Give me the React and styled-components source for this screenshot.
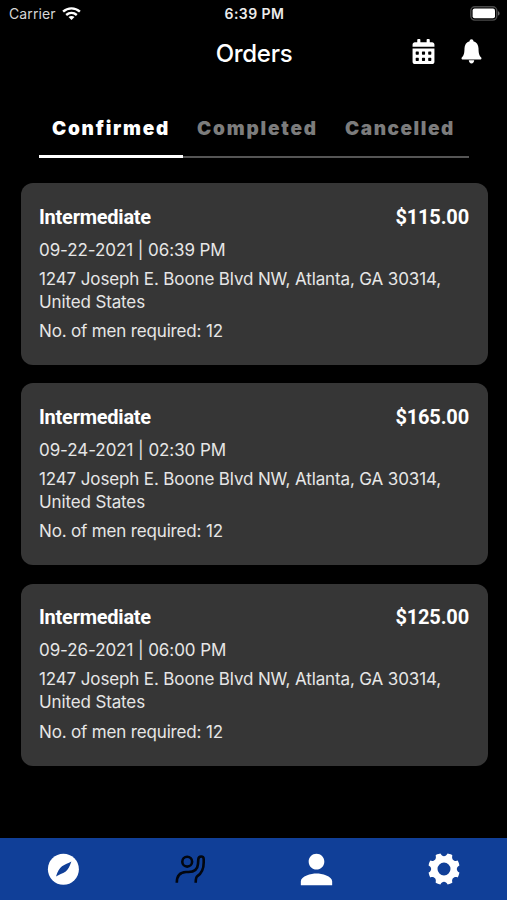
import React from "react";
import styled, { createGlobalStyle } from "styled-components";
import { FaCalendarAlt } from "react-icons/fa";
import { MdPerson } from "react-icons/md";

const GlobalStyle = createGlobalStyle`
  * { box-sizing: border-box; }
  body { margin: 0; background: #000; }
`;

const Screen = styled.main`
  width: 507px;
  height: 900px;
  display: flex;
  flex-direction: column;
  background: #000;
  color: #fff;
  font-family: Inter, "Liberation Sans", sans-serif;
  overflow: hidden;
`;

const StatusBar = styled.div`
  height: 28px;
  flex: none;
  display: grid;
  grid-template-columns: 1fr auto 1fr;
  align-items: center;
  padding: 0 7px 1px 9px;
  font-size: 14px;
  line-height: 27px;
  svg { display: block; }
`;

const Carrier = styled.span`
  display: flex;
  align-items: center;
  gap: 6px;
  color: #d6d6d6;
  letter-spacing: 0.1px;
`;

const Clock = styled.span`
  font-size: 14px;
  font-weight: 600;
  color: #ececec;
  letter-spacing: 0.45px;
`;

const Battery = styled.span`
  justify-self: end;
`;

const Header = styled.header`
  height: 50px;
  flex: none;
  display: grid;
  grid-template-columns: 1fr auto 1fr;
  align-items: center;
  padding: 0 25px 0 26px;
`;

const Title = styled.h1`
  grid-column: 2;
  margin: 0;
  font-size: 24px;
  line-height: 50px;
  padding-top: 1px;
  font-weight: 500;
  letter-spacing: -0.3px;
`;

const Actions = styled.div`
  justify-self: end;
  display: flex;
  align-items: center;
  gap: 25px;
  padding-bottom: 5px;
  svg { display: block; }
`;

const Tabs = styled.nav`
  display: flex;
  flex: none;
  height: 59px;
  margin: 21px 38px 25px 39px;
  background: linear-gradient(#555, #555) 0 100% / 100% 2px no-repeat;
`;

const Tab = styled.span`
  flex: none;
  width: ${(p) => p.$width}px;
  padding-left: ${(p) => p.$inset}px;
  line-height: 59px;
  font-size: 19px;
  font-weight: 900;
  letter-spacing: ${(p) => p.$spacing}px;
  white-space: nowrap;
  color: ${(p) => (p.$active ? "#fff" : "#7c7c7c")};
  border-bottom: ${(p) => (p.$active ? "3px solid #fff" : "0")};
`;

const Orders = styled.section`
  flex: 1;
  display: flex;
  flex-direction: column;
  gap: 18.4px;
  padding: 0 19.5px 0 20.5px;
`;

const Card = styled.article`
  height: 182px;
  border-radius: 12px;
  background: #363636;
  padding: 21.6px 18.5px 0;
`;

const CardHead = styled.div`
  display: flex;
  justify-content: space-between;
  font-family: Roboto, sans-serif;
  font-size: 20px;
  line-height: 24px;
  font-weight: 700;
`;

const Level = styled.span`
  letter-spacing: -0.25px;
`;

const Price = styled.span`
  letter-spacing: -0.15px;
`;

const Detail = styled.p`
  margin: ${(p) => p.$top}px 0 0;
  font-size: 17px;
  line-height: 23px;
  letter-spacing: ${(p) => p.$spacing}px;
  white-space: nowrap;
  color: #e6e6e6;
`;

const TabBar = styled.footer`
  height: 62px;
  flex: none;
  display: grid;
  grid-template-columns: repeat(4, 1fr);
  align-items: center;
  justify-items: center;
  background: #103f98;
  svg { display: block; }
`;

const WifiIcon = () => (
  <svg width="19" height="15" viewBox="0 0 19 15" fill="none" stroke="#fff" strokeWidth="2.4">
    <path d="M1.1 5.7C5.9 1.2 13.1 1.2 17.9 5.7" />
    <path d="M4.2 9C7.3 6.3 11.7 6.3 14.8 9" />
    <path d="M9.5 14 6.5 11.1C8.3 9.5 10.7 9.5 12.5 11.1Z" fill="#fff" stroke="none" />
  </svg>
);

const BatteryIcon = () => (
  <svg width="30" height="15" viewBox="0 0 30 15">
    <rect x=".8" y=".7" width="26" height="13.4" rx="4" fill="#000" stroke="#4a4a4a" strokeWidth="1.4" />
    <rect x="2.6" y="2.6" width="22.4" height="9.6" rx="2" fill="#fff" />
    <path d="M28 5.2c2.1.7 2.1 3.7 0 4.4z" fill="#666" />
  </svg>
);

const BellIcon = () => (
  <svg width="21" height="25" viewBox="0 0 21 25" fill="#fff">
    <path d="M10.5.3C9.3.3 8.7 1 8.6 2.2 5.3 3.2 3.6 5.8 3.5 9.3 3.4 14.4 2.9 16.5.8 18.6.3 19.3.5 20.5 1.4 20.5H19.6C20.5 20.5 20.7 19.3 20.2 18.6 18.1 16.5 17.6 14.4 17.5 9.3 17.4 5.8 15.7 3.2 12.4 2.2 12.3 1 11.7.3 10.5.3Z" />
    <path d="M7.8 21.3H13.2C13.1 23.2 12 24.5 10.5 24.5 9 24.5 7.9 23.2 7.8 21.3Z" />
  </svg>
);

const CompassIcon = () => (
  <svg width="32" height="32" viewBox="0 0 32 32">
    <circle cx="16.4" cy="16.3" r="15.5" fill="#fff" />
    <path d="M24.4 8.6C22.8 13.4 21 17 18.4 18.8 15.6 20.6 12 21.6 9 23.4 10.6 18.6 12.4 15 15 13.2 17.8 11.4 21.4 10.4 24.4 8.6Z" fill="#103f98" />
  </svg>
);

const WaveIcon = () => (
  <svg width="32" height="32" viewBox="0 0 32 32" fill="none" stroke="#02060f" strokeWidth="2.6">
    <circle cx="13.2" cy="8.7" r="4.9" />
    <path d="M2.8 29.7C2.8 22.5 5.8 19.2 12 19H14.5C20.5 18.8 23.7 15.7 24 10.8L24.3 6.3C24.6 2.6 29.7 2.6 29.7 6.3V9.5C29.7 16 27.5 20.4 23.4 23.1 21.9 24.1 21.7 25.5 21.7 29.7" />
  </svg>
);

const GearIcon = () => (
  <svg width="32" height="32" viewBox="-16 -16 32 32">
    <path
      fill="#fff"
      fillRule="evenodd"
      d="M-3.6-15.4C-6.2-14.9-7.8-14.2-8.4-13.6-7.2-9.9-9.9-7.2-13.6-8.4-14.2-7.8-14.9-6.2-15.4-3.6-12-1.9-12 1.9-15.4 3.6-14.9 6.2-14.2 7.8-13.6 8.4-9.9 7.2-7.2 9.9-8.4 13.6-7.8 14.2-6.2 14.9-3.6 15.4-1.9 12 1.9 12 3.6 15.4 6.2 14.9 7.8 14.2 8.4 13.6 7.2 9.9 9.9 7.2 13.6 8.4 14.2 7.8 14.9 6.2 15.4 3.6 12 1.9 12-1.9 15.4-3.6 14.9-6.2 14.2-7.8 13.6-8.4 9.9-7.2 7.2-9.9 8.4-13.6 7.8-14.2 6.2-14.9 3.6-15.4 1.9-12-1.9-12-3.6-15.4ZM6.5 0A6.5 6.5 0 1 0-6.5 0 6.5 6.5 0 1 0 6.5 0Z"
    />
  </svg>
);

const orders = [
  { date: "09-22-2021 | 06:39 PM", price: "$115.00" },
  { date: "09-24-2021 | 02:30 PM", price: "$165.00" },
  { date: "09-26-2021 | 06:00 PM", price: "$125.00" },
];

export default function App() {
  return (
    <Screen>
      <GlobalStyle />
      <StatusBar>
        <Carrier>Carrier <WifiIcon /></Carrier>
        <Clock>6:39 PM</Clock>
        <Battery><BatteryIcon /></Battery>
      </StatusBar>
      <Header>
        <Title>Orders</Title>
        <Actions>
          <FaCalendarAlt size={25} />
          <BellIcon />
        </Actions>
      </Header>
      <Tabs>
        <Tab $active $width={144} $inset={13} $spacing={1.75}>Confirmed</Tab>
        <Tab $width={148} $inset={14} $spacing={1.8}>Completed</Tab>
        <Tab $width={138} $inset={14} $spacing={1.55}>Cancelled</Tab>
      </Tabs>
      <Orders>
        {orders.map((order) => (
          <Card key={order.date}>
            <CardHead>
              <Level>Intermediate</Level>
              <Price>{order.price}</Price>
            </CardHead>
            <Detail $top={10.1} $spacing={-0.08}>{order.date}</Detail>
            <Detail $top={6} $spacing={-0.13}>
              1247 Joseph E. Boone Blvd NW, Atlanta, GA 30314,<br />United States
            </Detail>
            <Detail $top={6.2} $spacing={-0.16}>No. of men required: 12</Detail>
          </Card>
        ))}
      </Orders>
      <TabBar>
        <CompassIcon />
        <WaveIcon />
        <MdPerson size={47} />
        <GearIcon />
      </TabBar>
    </Screen>
  );
}
